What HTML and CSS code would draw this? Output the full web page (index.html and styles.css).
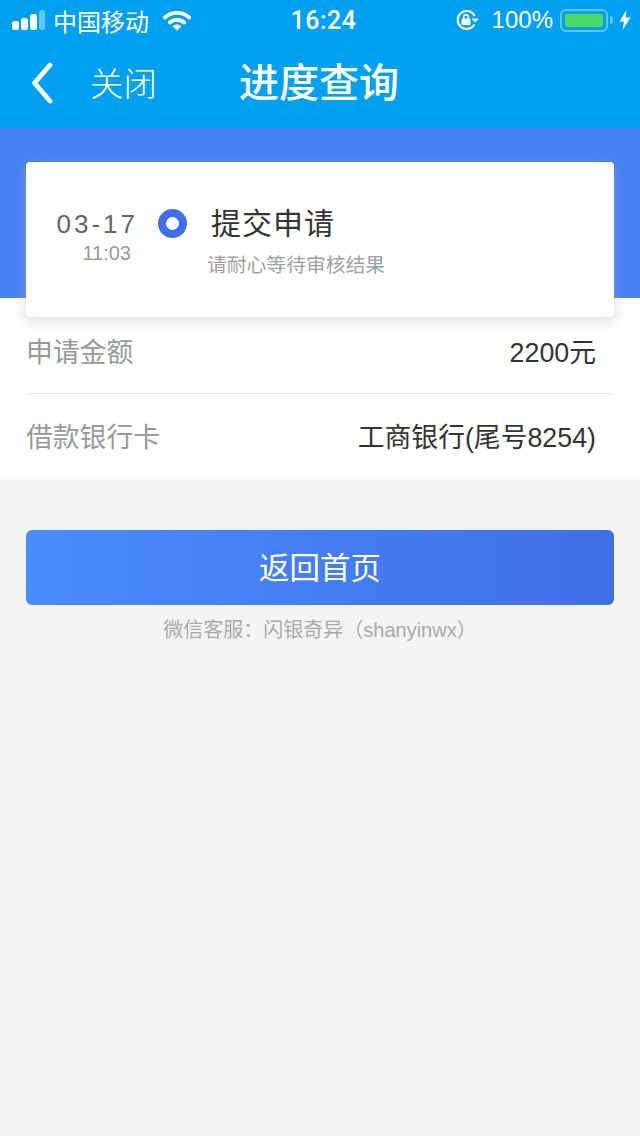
FILE: index.html
```html
<!DOCTYPE html>
<html>
<head>
  <meta content="text/html; charset=UTF-8" http-equiv="content-type" />
  <title>进度查询</title>
  <link rel="stylesheet" href="styles.css">
</head>
<body>
  <div class="statusBar">
    <div class="statusLeft">
      <svg class="signal" width="34" height="21" viewBox="0 0 34 21">
        <rect x="0" y="11" width="7" height="9" rx="2.500" fill="#fff"/>
        <rect x="9" y="8" width="7" height="12" rx="2.500" fill="#fff"/>
        <rect x="18" y="4" width="7" height="16" rx="2.500" fill="#fff"/>
        <rect x="27" y="0" width="6" height="20" rx="2.500" fill="#fff" fill-opacity="0.4"/>
      </svg>
      <span class="carrier">中国移动</span>
      <svg class="wifi" width="28" height="21" viewBox="0 0 28 21">
        <path d="M1.800 7.500C8.500 1.200 19.500 1.200 26.200 7.500" fill="none" stroke="#fff" stroke-width="3.800" stroke-linecap="round"/>
        <path d="M6.800 12.500C10.500 9 17.500 9 21.200 12.500" fill="none" stroke="#fff" stroke-width="3.800" stroke-linecap="round"/>
        <path d="M9.800 16.200C12.300 13.800 15.700 13.800 18.200 16.200L14 20.800Z" fill="#fff"/>
      </svg>
    </div>
    <div class="statusTime">16:24</div>
    <div class="statusRight">
      <svg class="lock" width="24" height="22" viewBox="0 0 24 22">
        <path d="M18.500 15.500A9 9 0 1 1 18.800 7" fill="none" stroke="#fff" stroke-width="2"/>
        <path d="M15.500 9.500H23L19.200 13.500Z" fill="#fff"/>
        <rect x="5.500" y="9.500" width="9" height="6.500" rx="1" fill="#fff"/>
        <path d="M7.700 9.500V8a2.300 2.300 0 0 1 4.600 0v1.500" fill="none" stroke="#fff" stroke-width="1.500"/>
      </svg>
      <span class="percent">100%</span>
      <div class="battery"><div class="batteryFill"></div></div>
      <div class="batteryCap"></div>
      <svg class="bolt" width="12" height="20" viewBox="0 0 12 20">
        <path d="M7.500 0L0.500 11.500H5L3.500 20L11.500 7.500H6.500Z" fill="#fff"/>
      </svg>
    </div>
  </div>

  <div class="navBar">
    <svg class="back" width="22" height="42" viewBox="0 0 22 42">
      <path d="M19 3L3.500 21L19 39" fill="none" stroke="#fff" stroke-width="4.800" stroke-linecap="round" stroke-linejoin="round"/>
    </svg>
    <span class="closeLink">关闭</span>
    <span class="navTitle">进度查询</span>
  </div>

  <div class="hero">
    <div class="card">
      <div class="cardDate">
        <div class="day">03-17</div>
        <div class="clock">11:03</div>
      </div>
      <div class="dot"></div>
      <div class="cardText">
        <div class="stepName">提交申请</div>
        <div class="stepHint">请耐心等待审核结果</div>
      </div>
    </div>
  </div>

  <div class="infoList">
    <div class="infoRow">
      <span class="infoLabel">申请金额</span>
      <span class="infoValue">2200元</span>
    </div>
    <div class="infoRow">
      <span class="infoLabel">借款银行卡</span>
      <span class="infoValue">工商银行(尾号8254)</span>
    </div>
  </div>

  <div class="actions">
    <div class="homeBtn">返回首页</div>
    <div class="service">微信客服：闪银奇异（shanyinwx）</div>
  </div>
</body>
</html>
```

FILE: styles.css
```css
html, body {
  margin: 0;
  padding: 0;
}
body {
  width: 640px;
  height: 1136px;
  overflow: hidden;
  background: #f4f4f4;
  font-family: "Liberation Sans", "Noto Sans CJK SC", sans-serif;
}
/* status bar */
.statusBar {
  display: flex;
  align-items: center;
  justify-content: space-between;
  height: 40px;
  padding: 0 9px 0 12px;
  background: #00a0f0;
  color: #fff;
}
.statusLeft, .statusRight {
  display: flex;
  align-items: center;
  width: 190px;
}
.statusRight {
  justify-content: flex-end;
}
.carrier {
  margin-left: 7px;
  font-size: 24px;
}
.wifi {
  margin-left: 14px;
}
.statusTime {
  margin-left: 4px;
  font-family: Roboto, sans-serif;
  font-size: 25px;
  font-weight: 500;
  letter-spacing: 0.5px;
}
.percent {
  margin-left: 12px;
  font-size: 24px;
}
.battery {
  box-sizing: border-box;
  width: 48px;
  height: 23px;
  margin-left: 7px;
  padding: 3px;
  border: 2px solid #66c4f5;
  border-radius: 6px;
}
.batteryFill {
  height: 100%;
  border-radius: 2px;
  background: #4cd964;
}
.batteryCap {
  width: 3px;
  height: 8px;
  margin-left: 2px;
  border-radius: 0 3px 3px 0;
  background: #66c4f5;
}
.bolt {
  margin-left: 6px;
}
/* navigation */
.navBar {
  position: relative;
  display: flex;
  align-items: center;
  box-sizing: border-box;
  height: 88px;
  padding: 0 0 4px 31px;
  background: #00a0f0;
  color: #fff;
}
.back {
  flex: none;
  margin-top: 2px;
}
.closeLink {
  margin: -2px 0 0 37px;
  font-size: 33.500px;
  font-weight: 300;
}
.navTitle {
  position: absolute;
  left: 0;
  right: 2px;
  margin-top: -4px;
  text-align: center;
  font-size: 40px;
  font-weight: 500;
}
/* card over the blue band */
.hero {
  position: relative;
  z-index: 1;
  height: 136px;
  padding: 34px 26px 0;
  background: #4680f5;
}
.card {
  display: flex;
  align-items: flex-start;
  box-sizing: border-box;
  height: 155px;
  padding-top: 40px;
  background: #fff;
  border-radius: 4px;
  box-shadow: 0 3px 14px rgba(170, 170, 170, 0.45);
}
.cardDate {
  width: 110px;
  text-align: right;
}
.day {
  margin-right: -2px;
  font-size: 26px;
  line-height: 44px;
  letter-spacing: 3px;
  color: #666;
}
.clock {
  margin-top: -5px;
  padding-right: 5px;
  font-size: 20px;
  line-height: 24px;
  color: #999;
}
.dot {
  box-sizing: border-box;
  width: 29px;
  height: 29px;
  margin: 7px 0 0 22px;
  border: 8px solid #3f6fe8;
  border-radius: 50%;
}
.cardText {
  margin-left: 20px;
}
.stepName {
  margin-left: 4px;
  font-size: 30px;
  line-height: 44px;
  letter-spacing: 1px;
  color: #333;
}
.stepHint {
  margin-top: 5px;
  font-size: 19.800px;
  line-height: 28px;
  color: #a0a0a0;
}
/* info rows */
.infoList {
  padding-top: 11px;
  background: #fff;
}
.infoRow {
  display: flex;
  align-items: center;
  justify-content: space-between;
  box-sizing: border-box;
  height: 85px;
  margin: 0 26px;
  padding: 0 18px 2px 0;
  border-bottom: 1px solid #e8e8e8;
}
.infoRow:last-child {
  border-bottom: 0;
}
.infoLabel {
  font-size: 26.800px;
  color: #999;
}
.infoValue {
  font-size: 26.800px;
  color: #333;
}
/* button */
.actions {
  padding: 51px 26px 0;
}
.homeBtn {
  height: 75px;
  line-height: 77px;
  text-align: center;
  font-size: 30.500px;
  color: #fff;
  border-radius: 6px;
  background: linear-gradient(90deg, #4a8cff, #3f6fe8);
}
.service {
  margin-top: 11px;
  text-align: center;
  font-size: 20px;
  line-height: 28px;
  color: #aaa;
}
```
